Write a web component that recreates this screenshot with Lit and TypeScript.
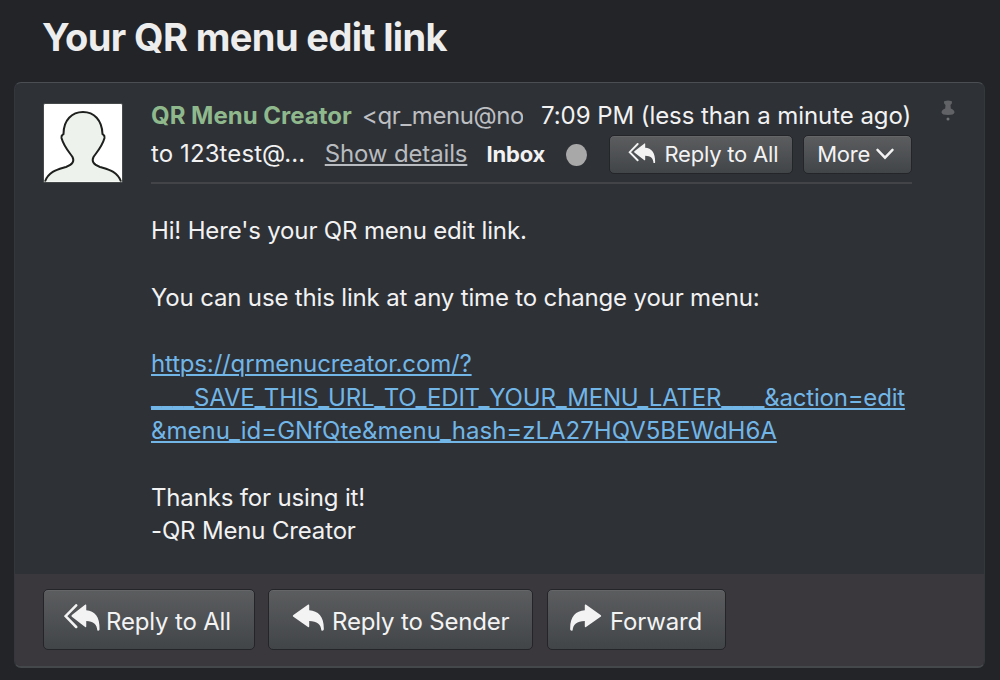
import { LitElement, css, html, svg } from "lit";
import { customElement, property } from "lit/decorators.js";

type IconName = "reply" | "reply-all" | "forward";

const ARROW = svg`
  <path
    d="M16.2 0.6 Q17.2 0.2 17.2 1.3 V6.3 C26.5 7 32.2 12.5 31.8 25.6 Q31.6 27.2 29.4 26.6 C28.8 20 25.2 17.2 17.2 17 V22.4 Q17 23.6 16 22.9 L1.4 12.8 Q0.3 12 1.4 11.1 Z"
  />
`;

@customElement("mail-icon")
export class MailIcon extends LitElement {
  @property() public name: IconName = "reply";

  static styles = css`
    :host {
      display: block;
      flex: none;
    }

    svg {
      display: block;
      width: 100%;
      height: 100%;
      fill: currentColor;
    }
  `;

  protected render() {
    if (this.name === "reply-all") {
      return html`
        <svg viewBox="0 0 36 28">
          <path
            d="M12.2 1.3 L1.6 12.2 L12.2 23"
            fill="none"
            stroke="currentColor"
            stroke-width="2.5"
            stroke-linecap="round"
          />
          <g transform="translate(6.6 0) scale(0.91 1)">${ARROW}</g>
        </svg>
      `;
    }
    const flip = this.name === "forward" ? "matrix(-1 0 0 1 32 0)" : "";
    return html`
      <svg viewBox="0 0 32 28"><g transform=${flip}>${ARROW}</g></svg>
    `;
  }
}

@customElement("app-root")
export class AppRoot extends LitElement {
  static styles = css`
    :host {
      display: flex;
      flex-direction: column;
      box-sizing: border-box;
      width: 1000px;
      height: 680px;
      padding: 0 15px 12px 14px;
      overflow: hidden;
      background: #222428;
      color: #f2f2f3;
      font-family: Inter, "Liberation Sans", sans-serif;
      font-size: 24px;
      white-space: nowrap;
    }

    .subject {
      height: 82px;
      box-sizing: border-box;
      margin: 0;
      padding: 13px 0 0 28px;
      color: #ededee;
      font-size: 38px;
      font-weight: 700;
      line-height: 48px;
      letter-spacing: -0.6px;
    }

    .card {
      display: flex;
      flex: 1;
      flex-direction: column;
      box-sizing: border-box;
      overflow: hidden;
      border: 1px solid #34373b;
      border-top-color: #4b4e52;
      border-bottom: 2px solid #44484b;
      border-radius: 7px;
      background: #2e3136;
    }

    .message {
      display: flex;
      flex: 1;
      padding: 20px 0 0 27.5px;
    }

    .avatar {
      flex: none;
      width: 78px;
      height: 78px;
      border: 1px solid #46494a;
      border-radius: 2px;
      background: #fff;
    }

    .main {
      width: 761px;
      margin-left: 28.5px;
    }

    .header {
      height: 79px;
      border-bottom: 2px solid #424448;
    }

    .row {
      display: flex;
      align-items: center;
    }

    .top {
      height: 24px;
    }

    .sender {
      width: 202px;
      color: #8fb98d;
      font-weight: 650;
      letter-spacing: 0;
    }

    .address {
      width: 161px;
      margin-left: 9px;
      overflow: hidden;
      color: #bdbfc3;
      letter-spacing: -0.4px;
    }

    .time {
      margin-left: 18px;
      letter-spacing: -0.06px;
    }

    .sub {
      height: 39px;
      margin-top: 8px;
    }

    .recipient,
    .details,
    .folder {
      margin-top: -2px;
    }

    .recipient {
      width: 174px;
      letter-spacing: 0.1px;
    }

    .details {
      width: 162px;
      color: #b8bbbf;
      letter-spacing: -0.15px;
      text-decoration: underline;
      text-decoration-thickness: 2px;
      text-underline-offset: 2px;
      text-decoration-skip-ink: none;
    }

    .folder {
      width: 80px;
      font-size: 22px;
      font-weight: 650;
      letter-spacing: -0.2px;
    }

    .dot {
      width: 21px;
      height: 22px;
      border-radius: 50%;
      background: #a8a8a9;
    }

    .button {
      display: flex;
      align-items: center;
      box-sizing: border-box;
      border: 1px solid #232529;
      border-radius: 5px;
      background: linear-gradient(#5b5d5f, #424548);
      box-shadow: inset 0 1px #646668;
      color: #f3f3f4;
    }

    .small {
      height: 39px;
      padding-bottom: 1px;
      font-size: 22px;
      letter-spacing: -0.2px;
    }

    .quick-reply {
      width: 184px;
      margin-left: 22px;
      padding-left: 18px;
    }

    .quick-reply mail-icon {
      width: 28px;
      height: 21px;
      margin: -2px 8px 0 0;
    }

    .more {
      width: 109px;
      margin-left: 10px;
      padding-left: 13px;
    }

    .chevron {
      width: 18px;
      height: 12px;
      margin-left: 6px;
    }

    .body {
      padding-top: 30px;
    }

    .line {
      height: 33.35px;
      line-height: 33.35px;
      letter-spacing: -0.16px;
    }

    .url-query {
      letter-spacing: -0.2px;
    }

    .url-hash {
      letter-spacing: 0;
    }

    .link {
      color: #72b6e8;
      text-decoration: underline;
      text-decoration-thickness: 2px;
      text-underline-offset: 2px;
    }

    .pin {
      width: 16px;
      height: 24px;
      margin: -4px 0 0 28px;
    }

    .footer {
      display: flex;
      box-sizing: border-box;
      height: 92px;
      padding: 15px 0 0 28px;
      background: #3a383c;
    }

    .large {
      height: 61px;
      padding: 3px 0 0 22px;
      letter-spacing: -0.17px;
    }

    .large mail-icon {
      width: 32px;
      height: 28px;
      margin: -6px 8px 0 0;
    }

    .reply-all {
      width: 212px;
      padding-left: 20px;
    }

    .large .all {
      width: 36px;
      margin-right: 6px;
    }

    .reply {
      width: 265px;
      margin-left: 13px;
      padding-left: 23px;
    }

    .forward {
      width: 179px;
      margin-left: 14px;
    }
  `;

  protected render() {
    return html`
      <h1 class="subject">Your QR menu edit link</h1>
      <article class="card">
        <div class="message">
          ${this.renderAvatar()}
          <div class="main">
            ${this.renderHeader()}
            <div class="body">
              <div class="line">Hi! Here's your QR menu edit link.</div>
              <div class="line"></div>
              <div class="line">
                You can use this link at any time to change your menu:
              </div>
              <div class="line"></div>
              <div class="line">
                <span class="link">https://qrmenucreator.com/?</span>
              </div>
              <div class="line url-query">
                <span class="link"
                  >____SAVE_THIS_URL_TO_EDIT_YOUR_MENU_LATER____&amp;action=edit</span
                >
              </div>
              <div class="line url-hash">
                <span class="link"
                  >&amp;menu_id=GNfQte&amp;menu_hash=zLA27HQV5BEWdH6A</span
                >
              </div>
              <div class="line"></div>
              <div class="line">Thanks for using it!</div>
              <div class="line">-QR Menu Creator</div>
            </div>
          </div>
          <svg class="pin" viewBox="0 0 16 24">
            <path
              d="M4 3 Q4 1.5 8 1.5 T12 3 Q12.2 5 10.5 6 L10.8 9.5 Q14.5 11 14.5 13.5 Q14 16 8 16 T1.5 13.5 Q1.5 11 5.2 9.5 L5.5 6 Q3.8 5 4 3 Z"
              fill="#606266"
            />
            <circle cx="8" cy="20" r="1.5" fill="#707275" />
          </svg>
        </div>
        <div class="footer">
          <div class="button large reply-all">
            <mail-icon class="all" name="reply-all"></mail-icon>
            <span>Reply to All</span>
          </div>
          <div class="button large reply">
            <mail-icon name="reply"></mail-icon>
            <span>Reply to Sender</span>
          </div>
          <div class="button large forward">
            <mail-icon name="forward"></mail-icon>
            <span>Forward</span>
          </div>
        </div>
      </article>
    `;
  }

  private renderHeader() {
    return html`
      <div class="header">
        <div class="row top">
          <span class="sender">QR Menu Creator</span>
          <span class="address">&lt;qr_menu@no</span>
          <span class="time">7:09 PM (less than a minute ago)</span>
        </div>
        <div class="row sub">
          <span class="recipient">to 123test@...</span>
          <span class="details">Show details</span>
          <span class="folder">Inbox</span>
          <span class="dot"></span>
          <div class="button small quick-reply">
            <mail-icon name="reply-all"></mail-icon>
            <span>Reply to All</span>
          </div>
          <div class="button small more">
            <span>More</span>
            <svg class="chevron" viewBox="0 0 18 12">
              <path
                d="M1.5 1.8 L9 9.7 L16.5 1.8"
                fill="none"
                stroke="#f3f3f4"
                stroke-width="2.4"
                stroke-linecap="round"
              />
            </svg>
          </div>
        </div>
      </div>
    `;
  }

  private renderAvatar() {
    return html`
      <svg class="avatar" viewBox="0 0 78 78">
        <path
          d="M1 77.5 C5 67 14 65.5 22 63 C29 60.5 30.5 57 28.5 53 C26 49 20 43 17.5 34 C17 31 18.5 31 19.5 30 C19.5 16 28 8 39 8 C50 8 58 16 58.5 30 C59.5 31 61 31 60.5 34 C58 43 52 49 49.5 53 C47.5 57 49 60.5 56 63 C64 65.5 73 67 77 77.5"
          fill="#edf2ec"
          stroke="#1e201e"
          stroke-width="2"
        />
      </svg>
    `;
  }
}
